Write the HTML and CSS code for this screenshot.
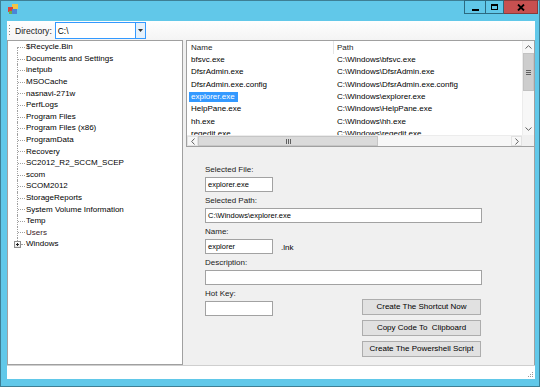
FILE: index.html
```html
<!DOCTYPE html>
<html>
<head>
<meta charset="utf-8">
<link rel="stylesheet" href="styles.css">
</head>
<body>
<div class="window">
  <div class="titlebar">
    <svg class="app-icon" width="10" height="10" viewBox="0 0 10 10">
      <rect x="4" y="0" width="6" height="5" fill="#f3c448"/>
      <rect x="0" y="3" width="5" height="5" fill="#d9413b"/>
      <rect x="4" y="5" width="5" height="5" fill="#4a86d8"/>
      <rect x="1" y="7" width="3" height="3" fill="#6ab04c"/>
    </svg>
    <div class="caption-buttons">
      <div class="cbtn cbtn-min"><span class="glyph-min"></span></div>
      <div class="cbtn cbtn-max"><span class="glyph-max"></span></div>
      <div class="cbtn cbtn-close">
        <svg width="8" height="7" viewBox="0 0 8 7"><path d="M1 0.5 L7 6.5 M7 0.5 L1 6.5" stroke="#000" stroke-width="1.8"/></svg>
      </div>
    </div>
  </div>
  <div class="client">
    <div class="toolbar">
      <span class="grip"></span>
      <span class="tb-label">Directory:</span>
      <div class="combo">
        <span class="combo-text">C:\</span>
        <span class="combo-btn"><svg width="5" height="3" viewBox="0 0 5 3"><path d="M0 0 H5 L2.5 3 Z" fill="#333"/></svg></span>
      </div>
    </div>
    <div class="main">
      <div class="tree">
        <ul class="tree-items">
          <li class="first">$Recycle.Bin</li>
          <li>Documents and Settings</li>
          <li>inetpub</li>
          <li>MSOCache</li>
          <li>nasnavi-271w</li>
          <li>PerfLogs</li>
          <li>Program Files</li>
          <li>Program Files (x86)</li>
          <li>ProgramData</li>
          <li>Recovery</li>
          <li>SC2012_R2_SCCM_SCEP</li>
          <li>scom</li>
          <li>SCOM2012</li>
          <li>StorageReports</li>
          <li>System Volume Information</li>
          <li>Temp</li>
          <li class="users">Users</li>
          <li class="last"><span class="expander"></span>Windows</li>
        </ul>
      </div>
      <div class="right">
        <div class="listview">
          <div class="lv-body">
            <div class="lv-content">
              <div class="lv-header">
                <div class="hcol hcol-name">Name</div>
                <div class="hcol hcol-path">Path</div>
              </div>
              <div class="lv-row"><div class="cell cell-name">bfsvc.exe</div><div class="cell cell-path">C:\Windows\bfsvc.exe</div></div>
              <div class="lv-row"><div class="cell cell-name">DfsrAdmin.exe</div><div class="cell cell-path">C:\Windows\DfsrAdmin.exe</div></div>
              <div class="lv-row"><div class="cell cell-name">DfsrAdmin.exe.config</div><div class="cell cell-path">C:\Windows\DfsrAdmin.exe.config</div></div>
              <div class="lv-row"><div class="cell cell-name"><span class="selected">explorer.exe</span></div><div class="cell cell-path">C:\Windows\explorer.exe</div></div>
              <div class="lv-row"><div class="cell cell-name">HelpPane.exe</div><div class="cell cell-path">C:\Windows\HelpPane.exe</div></div>
              <div class="lv-row"><div class="cell cell-name">hh.exe</div><div class="cell cell-path">C:\Windows\hh.exe</div></div>
              <div class="lv-row"><div class="cell cell-name">regedit.exe</div><div class="cell cell-path">C:\Windows\regedit.exe</div></div>
            </div>
            <div class="vscroll">
              <div class="sb-btn"><svg width="7" height="4" viewBox="0 0 7 4"><path d="M0.5 3.5 L3.5 0.7 L6.5 3.5" fill="none" stroke="#606060" stroke-width="1"/></svg></div>
              <div class="vthumb"><span class="vgrip"></span></div>
              <div class="sb-track"></div>
              <div class="sb-btn"><svg width="7" height="4" viewBox="0 0 7 4"><path d="M0.5 0.5 L3.5 3.3 L6.5 0.5" fill="none" stroke="#606060" stroke-width="1"/></svg></div>
            </div>
          </div>
          <div class="lv-bottom">
            <div class="hscroll">
              <div class="sb-btn sb-hbtn"><svg width="4" height="7" viewBox="0 0 4 7"><path d="M3.5 0.5 L0.7 3.5 L3.5 6.5" fill="none" stroke="#606060" stroke-width="1"/></svg></div>
              <div class="hthumb"><span class="hgrip"></span></div>
              <div class="sb-track"></div>
              <div class="sb-btn sb-hbtn"><svg width="4" height="7" viewBox="0 0 4 7"><path d="M0.5 0.5 L3.3 3.5 L0.5 6.5" fill="none" stroke="#606060" stroke-width="1"/></svg></div>
            </div>
            <div class="corner"></div>
          </div>
        </div>
        <div class="form">
          <div class="field">
            <div class="label">Selected File:</div>
            <div class="textbox tb-short">explorer.exe</div>
          </div>
          <div class="field">
            <div class="label">Selected Path:</div>
            <div class="textbox tb-long">C:\Windows\explorer.exe</div>
          </div>
          <div class="field">
            <div class="label">Name:</div>
            <div class="inline-row">
              <div class="textbox tb-short">explorer</div>
              <span class="suffix">.lnk</span>
            </div>
          </div>
          <div class="field">
            <div class="label">Description:</div>
            <div class="textbox tb-long"></div>
          </div>
          <div class="last-row">
            <div class="field">
              <div class="label">Hot Key:</div>
              <div class="textbox tb-short"></div>
            </div>
            <div class="buttons">
              <div class="button">Create The Shortcut Now</div>
              <div class="button">Copy Code To &nbsp;Clipboard</div>
              <div class="button">Create The Powershell Script</div>
            </div>
          </div>
        </div>
      </div>
    </div>
    <div class="statusbar">
      <svg class="sizegrip" width="7" height="7" viewBox="0 0 7 7">
        <rect x="5" y="1" width="1" height="1" fill="#9a9a9a"/>
        <rect x="3" y="3" width="1" height="1" fill="#9a9a9a"/>
        <rect x="5" y="3" width="1" height="1" fill="#9a9a9a"/>
        <rect x="1" y="5" width="1" height="1" fill="#9a9a9a"/>
        <rect x="3" y="5" width="1" height="1" fill="#9a9a9a"/>
        <rect x="5" y="5" width="1" height="1" fill="#9a9a9a"/>
      </svg>
    </div>
  </div>
</div>
</body>
</html>
```

FILE: styles.css
```css
* { box-sizing: border-box; }
html, body { margin: 0; padding: 0; }
body {
  width: 540px;
  height: 387px;
  overflow: hidden;
  background: #61c8e9;
  font-family: "Liberation Sans", Arial, sans-serif;
  font-size: 8px;
  color: #000;
}
.window {
  width: 540px;
  height: 387px;
  background: #61c8e9;
  border: 1px solid #3e7f95;
  display: flex;
  flex-direction: column;
}
.titlebar {
  height: 20px;
  display: flex;
  align-items: flex-start;
}
.app-icon { margin-left: 7px; margin-top: 3px; display: block; }
.caption-buttons {
  margin-left: auto;
  margin-right: 1px;
  margin-top: -1px;
  display: flex;
  height: 14px;
}
.cbtn {
  height: 14px;
  display: flex;
  align-items: center;
  justify-content: center;
}
.cbtn-min { width: 21px; border: 1px solid #2c6a80; border-right: none; }
.cbtn-max { width: 19px; border: 1px solid #2c6a80; }
.cbtn-close { width: 34px; background: #c75050; border: 1px solid #8a3a3a; border-left: none; }
.glyph-min { width: 7px; height: 2px; background: #000; margin-top: 5px; }
.glyph-max { width: 7px; height: 6px; border: 1px solid #000; border-top-width: 2px; }

.client {
  margin: 0 4px 7px 6px;
  height: 358px;
  background: #f0f0f0;
  display: flex;
  flex-direction: column;
}
.toolbar {
  height: 19px;
  background: linear-gradient(#fefefe, #f4f4f4);
  display: flex;
  align-items: center;
}
.grip {
  width: 1px;
  height: 11px;
  margin-left: 2px;
  background: repeating-linear-gradient(to bottom, #8a8a8a 0 1px, transparent 1px 3px);
}
.tb-label { margin-left: 5px; font-size: 8.6px; color: #1a1a1a; }
.combo {
  margin-left: 3px;
  width: 91px;
  height: 17px;
  border: 1px solid #3399ff;
  background: #fff;
  display: flex;
  align-items: center;
}
.combo-text { padding-left: 2px; flex: 1; font-size: 8.4px; }
.combo-btn {
  width: 10px;
  height: 15px;
  background: #e5f1fb;
  border-left: 1px solid #3399ff;
  display: flex;
  align-items: center;
  justify-content: center;
}
.combo-btn svg { display: block; }

.main {
  height: 325px;
  display: flex;
}
.tree {
  width: 176px;
  height: 325px;
  background: #fff;
  border: 1px solid #a0a0a0;
  padding-top: 0.2px;
}
.tree-items {
  list-style: none;
  margin: 0 0 0 9px;
  padding: 0;
}
.tree-items li {
  position: relative;
  height: 11.6px;
  line-height: 11.6px;
  padding-left: 9px;
  white-space: nowrap;
}
.tree-items li::before {
  content: "";
  position: absolute;
  left: 1px;
  top: 5.8px;
  width: 7px;
  border-top: 1px dotted #a0a0a0;
}
.tree-items li::after {
  content: "";
  position: absolute;
  left: 0;
  top: 0;
  bottom: 0;
  border-left: 1px dotted #a0a0a0;
}
.tree-items li.first::after { top: 5.8px; }
.tree-items li.last::after { bottom: 9px; }
.tree-items li.last::before { left: 4px; width: 4px; }
.tree-items li.users { color: #3a1a28; }
.expander {
  position: absolute;
  left: -3px;
  top: 2.3px;
  width: 7px;
  height: 7px;
  border: 1px solid #8e8e8e;
  background: linear-gradient(#ffffff, #e6e6e6);
  z-index: 1;
}
.expander::before {
  content: "";
  position: absolute;
  left: 1px;
  top: 2px;
  width: 3px;
  height: 1px;
  background: #222;
}
.expander::after {
  content: "";
  position: absolute;
  left: 2px;
  top: 1px;
  width: 1px;
  height: 3px;
  background: #222;
}

.right {
  flex: 1;
  border-right: 1px solid #a0a0a0;
  display: flex;
  flex-direction: column;
}
.listview {
  margin-left: 3px;
  height: 107px;
  border: 1px solid #a0a0a0;
  border-right: none;
  background: #fff;
  display: flex;
  flex-direction: column;
}
.lv-body {
  height: 94px;
  display: flex;
}
.lv-content {
  flex: 1;
  overflow: hidden;
}
.lv-header {
  height: 13px;
  display: flex;
  line-height: 13px;
  color: #1e1e1e;
}
.hcol-name { width: 146px; padding-left: 4px; }
.hcol-path { flex: 1; padding-left: 3px; border-left: 1px solid #e5e5e5; }
.lv-row {
  height: 12.33px;
  line-height: 12.33px;
  display: flex;
  white-space: nowrap;
}
.cell-name { width: 146px; padding-left: 4px; }
.cell-path { flex: 1; padding-left: 4px; }
.selected {
  background: #3399ff;
  color: #fff;
  margin-left: -2px;
  padding: 0 3px 0 2px;
  display: inline-block;
  height: 10.5px;
  line-height: 10.5px;
  vertical-align: top;
  margin-top: 1px;
}
.vscroll {
  width: 12px;
  background: #f7f7f7;
  border-left: 1px solid #ececec;
  display: flex;
  flex-direction: column;
}
.sb-btn {
  height: 12px;
  display: flex;
  align-items: center;
  justify-content: center;
}
.sb-btn svg { display: block; }
.vthumb {
  height: 38px;
  background: #cdcdcd;
  border: 1px solid #c2c2c2;
  display: flex;
  align-items: center;
  justify-content: center;
}
.vgrip {
  width: 5px;
  height: 5px;
  background: repeating-linear-gradient(to bottom, #606060 0 1px, transparent 1px 2px);
}
.sb-track { flex: 1; }
.lv-bottom {
  height: 11px;
  display: flex;
}
.hscroll {
  flex: 1;
  display: flex;
  background: #f7f7f7;
  border-top: 1px solid #ececec;
}
.sb-hbtn {
  width: 11px;
  height: auto;
  border: 1px solid #e2e2e2;
}
.hthumb {
  width: 180px;
  background: #dadada;
  border: 1px solid #c6c6c6;
  display: flex;
  align-items: center;
  justify-content: center;
}
.hgrip {
  width: 5px;
  height: 5px;
  background: repeating-linear-gradient(to right, #606060 0 1px, transparent 1px 2px);
}
.corner { width: 12px; background: #f0f0f0; }

.form {
  padding: 18px 0 0 22px;
}
.field { margin-bottom: 4px; }
.label {
  height: 10px;
  line-height: 10px;
  color: #1a1a1a;
}
.textbox {
  margin-top: 2px;
  height: 15px;
  border: 1px solid #a2a2a2;
  background: #fff;
  font-size: 7.5px;
  line-height: 13px;
  padding-left: 2px;
  white-space: nowrap;
}
.tb-short { width: 68px; }
.tb-long { width: 277px; }
.inline-row { display: flex; align-items: flex-end; }
.suffix { margin-left: 8px; line-height: 12px; }
.last-row { display: flex; }
.buttons {
  margin-left: 89px;
  margin-top: 10px;
  display: flex;
  flex-direction: column;
  gap: 5px;
}
.button {
  width: 119px;
  height: 16px;
  border: 1px solid #adadad;
  background: #e1e1e1;
  text-align: center;
  line-height: 14px;
  white-space: nowrap;
}

.statusbar {
  height: 14px;
  background: #fff;
  border-top: 1px solid #cfcfcf;
  display: flex;
  justify-content: flex-end;
  align-items: flex-end;
}
.sizegrip { display: block; margin-right: 1px; margin-bottom: 1px; }
```
